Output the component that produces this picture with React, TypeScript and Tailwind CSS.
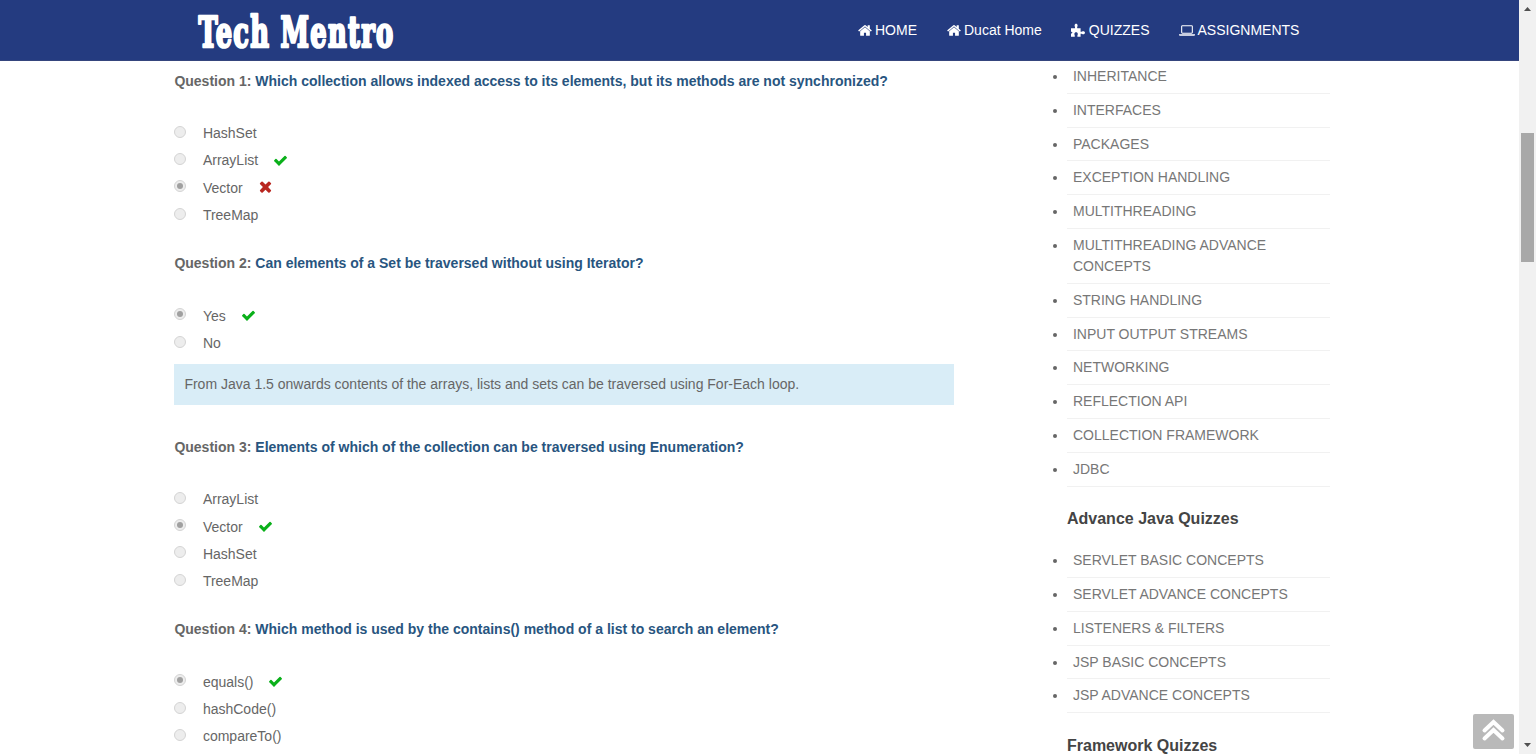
import React from "react";

type IconProps = { d: string; box?: string; className: string };
const Icon = ({ d, box = "0 0 1792 1792", className }: IconProps) => (
  <svg viewBox={box} className={className} fill="currentColor" aria-hidden="true">
    <path d={d} />
  </svg>
);

const HOME =
  "M1472 992v480q0 26-19 45t-45 19h-384v-384h-256v384h-384q-26 0-45-19t-19-45v-480q0-1 .5-3t.5-3l575-474 575 474q1 2 1 6zm223-69l-62 74q-8 9-21 11h-3q-13 0-21-7l-692-577-692 577q-12 8-24 7-13-2-21-11l-62-74q-8-10-7-23.5t11-21.5l719-599q32-26 76-26t76 26l244 204v-195q0-14 9-23t23-9h192q14 0 23 9t9 23v408l219 182q10 8 11 21.5t-7 23.5z";
const CHECK =
  "M1671 566q0 40-28 68l-724 724-136 136q-28 28-68 28t-68-28l-136-136-362-362q-28-28-28-68t28-68l136-136q28-28 68-28t68 28l294 295 656-657q28-28 68-28t68 28l136 136q28 28 28 68z";
const CROSS =
  "M1490 1322q0 40-28 68l-136 136q-28 28-68 28t-68-28l-294-294-294 294q-28 28-68 28t-68-28l-136-136q-28-28-28-68t28-68l294-294-294-294q-28-28-28-68t28-68l136-136q28-28 68-28t68 28l294 294 294-294q28-28 68-28t68 28l136 136q28 28 28 68t-28 68l-294 294 294 294q28 28 28 68z";
const LAPTOP =
  "M416 1280q-66 0-113-47t-47-113v-704q0-66 47-113t113-47h1088q66 0 113 47t47 113v704q0 66-47 113t-113 47h-1088zm-32-864v704q0 13 9.5 22.5t22.5 9.5h1088q13 0 22.5-9.5t9.5-22.5v-704q0-13-9.5-22.5t-22.5-9.5h-1088q-13 0-22.5 9.5t-9.5 22.5zm1376 928h160v96q0 40-47 68t-113 28h-1600q-66 0-113-28t-47-68v-96h1760z";
const PUZZLE =
  "M0 5.2H3.9C4.4 4.3 3.6 3.4 3.6 2.4 3.6 1.4 4.3.8 5.1.8S6.6 1.4 6.6 2.4C6.6 3.4 5.8 4.3 6.3 5.2H9.6V8.7C10.6 9.2 11.1 8.2 12.2 8.2 13.3 8.2 14 8.8 14 9.7S13.3 11.2 12.2 11.2C11.1 11.2 10.6 10.3 9.6 10.8V13.8H6.5C6 12.6 6.8 12.1 6.8 10.9 6.8 9.8 6.1 9.2 5.1 9.2S3.4 9.8 3.4 10.9C3.4 12.1 4.2 12.6 3.7 13.8H0V10.8L1.6 9.7 0 8.4Z";

type Option = { label: string; selected?: boolean; mark?: "right" | "wrong" };
type Question = { text: string; options: Option[]; note?: string };

const questions: Question[] = [
  {
    text: "Which collection allows indexed access to its elements, but its methods are not synchronized?",
    options: [
      { label: "HashSet" },
      { label: "ArrayList", mark: "right" },
      { label: "Vector", selected: true, mark: "wrong" },
      { label: "TreeMap" },
    ],
  },
  {
    text: "Can elements of a Set be traversed without using Iterator?",
    options: [{ label: "Yes", selected: true, mark: "right" }, { label: "No" }],
    note: "From Java 1.5 onwards contents of the arrays, lists and sets can be traversed using For-Each loop.",
  },
  {
    text: "Elements of which of the collection can be traversed using Enumeration?",
    options: [
      { label: "ArrayList" },
      { label: "Vector", selected: true, mark: "right" },
      { label: "HashSet" },
      { label: "TreeMap" },
    ],
  },
  {
    text: "Which method is used by the contains() method of a list to search an element?",
    options: [
      { label: "equals()", selected: true, mark: "right" },
      { label: "hashCode()" },
      { label: "compareTo()" },
    ],
  },
];

const coreTopics = [
  "INHERITANCE",
  "INTERFACES",
  "PACKAGES",
  "EXCEPTION HANDLING",
  "MULTITHREADING",
  "MULTITHREADING ADVANCE CONCEPTS",
  "STRING HANDLING",
  "INPUT OUTPUT STREAMS",
  "NETWORKING",
  "REFLECTION API",
  "COLLECTION FRAMEWORK",
  "JDBC",
];
const advanceTopics = [
  "SERVLET BASIC CONCEPTS",
  "SERVLET ADVANCE CONCEPTS",
  "LISTENERS & FILTERS",
  "JSP BASIC CONCEPTS",
  "JSP ADVANCE CONCEPTS",
];

const Radio = ({ on }: { on?: boolean }) => (
  <span className="mb-[4px] flex h-3 w-3 shrink-0 items-center justify-center rounded-full border border-[#d4d4d4] bg-[#ededed]">
    {on && <span className="h-[6px] w-[6px] rounded-full bg-[#a0a0a0]" />}
  </span>
);

const OptionRow = ({ option }: { option: Option }) => (
  <div className="flex h-[27.3px] items-center">
    <Radio on={option.selected} />
    <span className="ml-[16.5px]">{option.label}</span>
    {option.mark === "right" && <Icon d={CHECK} className="mb-px ml-[15px] h-[15px] w-[15px] text-[#0ab01a]" />}
    {option.mark === "wrong" && <Icon d={CROSS} className="mb-[4px] ml-[14px] h-[17px] w-[17px] text-[#b9261f]" />}
  </div>
);

const QuestionBlock = ({ question }: { question: Question }) => (
  <section className={question.note ? "h-[183.5px]" : "h-[182.6px]"}>
    <h4 className="h-[59px] pt-[9.6px] text-[14px] leading-5 font-bold whitespace-nowrap">
      Question {questions.indexOf(question) + 1}: <span className="text-[#28557f]">{question.text}</span>
    </h4>
    <div>
      {question.options.map((option) => (
        <OptionRow key={option.label} option={option} />
      ))}
    </div>
    {question.note && (
      <p className="mt-[7px] flex h-[41px] items-center bg-[#d9edf7] pl-[10px]">{question.note}</p>
    )}
  </section>
);

const TopicList = ({ topics }: { topics: string[] }) => (
  <ul>
    {topics.map((topic) => (
      <li key={topic} className="flex">
        <span className="mt-[15px] mr-[10px] h-1 w-1 shrink-0 rounded-full bg-[#666]" />
        <span className="w-[263px] border-b border-[#f1f1f1] pt-[6px] pr-10 pb-[5.8px] pl-[6px] leading-[21px] text-[#777]">
          {topic}
        </span>
      </li>
    ))}
  </ul>
);

const NavLink = ({ icon, children }: { icon: React.ReactNode; children: React.ReactNode }) => (
  <a className="flex items-center">
    {icon}
    <span>{children}</span>
  </a>
);

export default function App() {
  return (
    <div className="relative flex h-[754px] w-[1536px] overflow-hidden bg-white font-['Liberation_Sans',Arial,sans-serif] text-[14px] text-[#666]">
      <div className="flex h-full w-[1519px] flex-col overflow-hidden">
        <header className="flex h-[61px] shrink-0 items-center border-b border-[#35457d] bg-[#243b80] text-white">
          <svg className="ml-[192px] h-[60px] w-[208px] shrink-0 overflow-visible" aria-label="Tech Mentro">
            <text
              x="6.5"
              y="46.5"
              textLength="196"
              lengthAdjust="spacingAndGlyphs"
              fill="#fff"
              stroke="#fff"
              strokeWidth="2.6"
              strokeLinejoin="round"
              className="font-['DejaVu_Serif_Condensed','DejaVu_Serif',serif] text-[43px] font-bold tracking-[2px]"
            >
              Tech Mentro
            </text>
          </svg>
          <nav className="ml-[458px] flex items-center gap-[30px] whitespace-nowrap">
            <NavLink icon={<Icon d={HOME} box="64 0 1664 1792" className="mr-[3px] h-[15px] w-[14px]" />}>HOME</NavLink>
            <NavLink icon={<Icon d={HOME} box="64 0 1664 1792" className="mr-[3px] h-[15px] w-[14px]" />}>Ducat Home</NavLink>
            <NavLink icon={<Icon d={PUZZLE} box="0 0 14 14" className="-ml-px mr-[4px] h-[14px] w-[14px]" />}>QUIZZES</NavLink>
            <NavLink icon={<Icon d={LAPTOP} box="0 0 1920 1792" className="mr-[2px] h-[15px] w-4" />}>ASSIGNMENTS</NavLink>
          </nav>
        </header>
        <div className="flex flex-1 overflow-hidden">
          <main className="ml-[174.4px] w-[780px]">
            {questions.map((question) => (
              <QuestionBlock key={question.text} question={question} />
            ))}
          </main>
          <aside className="ml-[98.6px] w-[277px]">
            <div className="-mt-[1px]">
              <TopicList topics={coreTopics} />
            </div>
            <h3 className="mt-[21px] ml-[14px] h-[36.6px] text-[16px] leading-[22px] font-bold text-[#444]">
              Advance Java Quizzes
            </h3>
            <TopicList topics={advanceTopics} />
            <h3 className="mt-[21.4px] ml-[14px] text-[16px] leading-[22px] font-bold text-[#444]">Framework Quizzes</h3>
          </aside>
        </div>
      </div>
      <div className="flex h-full w-[17px] flex-col items-center bg-[#f1f1f1]">
        <svg className="h-[17px] w-[17px]" viewBox="0 0 17 17">
          <path d="M5 11L8.5 7L12 11Z" fill="#505050" />
        </svg>
        <div className="mt-[116px] h-[129px] w-[13px] bg-[#a8a8a8]" />
        <svg className="mt-auto h-[17px] w-[17px]" viewBox="0 0 17 17">
          <path d="M5 6L8.5 10L12 6Z" fill="#505050" />
        </svg>
      </div>
      <button className="absolute right-[22px] bottom-[5px] h-[35px] w-[41px] rounded-[2px] bg-[#b9b9b9]" aria-label="Back to top">
        <svg viewBox="0 0 41 35" className="h-[35px] w-[41px]" fill="none" stroke="#fff" strokeWidth="4" strokeLinecap="round" strokeLinejoin="miter">
          <path d="M11.5 16.5L20.5 8L29.5 16.5M11.5 24.5L20.5 16L29.5 24.5" />
        </svg>
      </button>
    </div>
  );
}
